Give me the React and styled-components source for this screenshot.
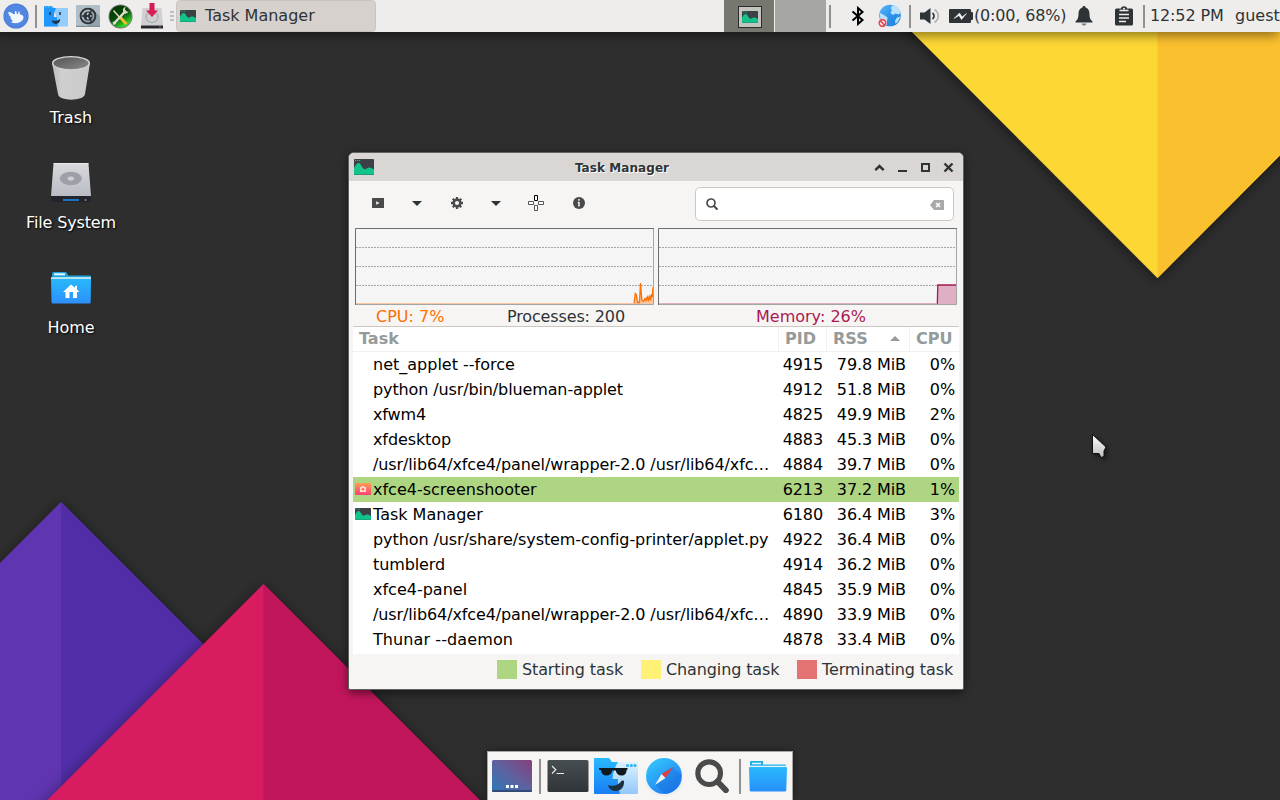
import React from "react";
import styled, { createGlobalStyle } from "styled-components";

const Global = createGlobalStyle`
  * { box-sizing: border-box; }
  html, body { margin: 0; padding: 0; }
  body { font-family: "DejaVu Sans", sans-serif; font-size: 16px; color: #2e3436; overflow: hidden; }
  svg { display: block; flex: none; }
`;

/* ---------- desktop ---------- */

const Desktop = styled.div`
  position: relative;
  width: 1280px;
  height: 800px;
  overflow: hidden;
  background: #2e2e2e;
`;

const WallpaperSvg = styled.svg`
  position: absolute;
  inset: 0;
`;

const Shortcuts = styled.nav`
  position: absolute;
  left: 0;
  top: 52px;
  width: 142px;
  display: flex;
  flex-direction: column;
`;

const Shortcut = styled.div`
  height: 105px;
  display: flex;
  flex-direction: column;
  align-items: center;
`;

const ShortcutLabel = styled.span`
  margin-top: 4px;
  line-height: 19px;
  letter-spacing: ${(p) => p.$track || 0}px;
  color: #fff;
  text-shadow: 1px 1px 2px #000;
`;

const Cursor = styled.svg`
  position: absolute;
  left: 1088px;
  top: 430px;
  filter: drop-shadow(2px 2px 2px rgba(0, 0, 0, 0.5));
`;

/* ---------- top panel ---------- */

const Panel = styled.header`
  position: absolute;
  left: 0;
  top: 0;
  width: 1280px;
  height: 32px;
  display: flex;
  background: #eeedec;
  box-shadow: -4px 2px 10px 2px rgba(0, 0, 0, 0.42);
  white-space: nowrap;
  overflow: visible;
`;

const Slot = styled.div`
  width: ${(p) => p.$w}px;
  height: 32px;
  margin-left: ${(p) => p.$before || 0}px;
  flex: none;
  display: flex;
  align-items: center;
  justify-content: center;
`;

const PanelText = styled.div`
  width: ${(p) => p.$w}px;
  margin-left: ${(p) => p.$before || 0}px;
  letter-spacing: ${(p) => p.$track || 0}px;
  flex: none;
  line-height: 31px;
`;

const Rule = styled.div`
  width: 2px;
  height: ${(p) => p.$h || 23}px;
  background: #8f9190;
`;

const TaskButton = styled.div`
  width: 200px;
  height: 32px;
  flex: none;
  display: flex;
  align-items: center;
  gap: 9px;
  padding-left: 3px;
  line-height: 29px;
  background: #d6d1cd;
  border: 1px solid #c9c4bf;
  border-radius: 4px;
`;

const TaskButtonText = styled.span`
  height: 30px;
`;

const PanelSpace = styled.div`
  flex: 1;
`;

const Workspace = styled.div`
  width: 51px;
  height: 32px;
  flex: none;
  display: flex;
  align-items: center;
  justify-content: center;
  background: ${(p) => (p.$active ? "#767870" : "#a6a6a5")};
  border-right: ${(p) => (p.$active ? "1px solid #eeedec" : "none")};
`;

const MiniWindow = styled.div`
  width: 24px;
  height: 22px;
  margin: 1px 0 0 2px;
  display: flex;
  align-items: center;
  justify-content: center;
  background: #c4c5be;
  border: 1px solid #2b2e2c;
`;

/* ---------- window ---------- */

const Window = styled.main`
  position: absolute;
  left: 348px;
  top: 152px;
  width: 616px;
  height: 538px;
  display: flex;
  flex-direction: column;
  background: #f6f5f4;
  border: 1px solid #61615f;
  border-radius: 6px 6px 2px 2px;
  overflow: hidden;
`;

const WindowShadow = styled.div`
  position: absolute;
  left: 348px;
  top: 152px;
  width: 616px;
  height: 538px;
  border-radius: 6px;
  box-shadow: 0 3px 9px 1px rgba(0, 0, 0, 0.45);
`;

const TitleBar = styled.div`
  height: 28px;
  flex: none;
  display: flex;
  align-items: center;
  padding: 0 8px 0 5px;
  background: #dad6d3;
`;

const Title = styled.h1`
  margin: 0;
  flex: 1;
  padding: 1px 2px 0 0;
  text-align: center;
  font-size: 12px;
  letter-spacing: 0.07px;
  line-height: 28px;
  font-weight: bold;
  text-shadow: 1px 1px 0 #fff;
`;

const TitleButtons = styled.div`
  display: flex;
  gap: 9px;
`;

const Toolbar = styled.div`
  height: 47px;
  flex: none;
  display: flex;
  align-items: center;
  padding: 0 9px;
`;

const ToolButton = styled.div`
  width: ${(p) => p.$w}px;
  height: 34px;
  margin-bottom: 3px;
  display: flex;
  align-items: center;
  justify-content: center;
`;

const Search = styled.div`
  width: 259px;
  height: 34px;
  margin: 0 0 1px auto;
  display: flex;
  align-items: center;
  justify-content: space-between;
  padding: 0 9px 0 10px;
  background: #fff;
  border: 1px solid #cdc7c2;
  border-radius: 5px;
`;

const ClearButton = styled.span`
  padding-top: 2px;
`;

const Graphs = styled.div`
  flex: none;
  display: flex;
  gap: 4px;
  padding: 0 6px;
`;

const Stats = styled.div`
  height: 21px;
  flex: none;
  display: grid;
  grid-template-columns: 27px 131px 249px 1fr;
  line-height: 24px;
`;

const Stat = styled.span`
  color: ${(p) => p.$color || "#2e3436"};
  letter-spacing: ${(p) => p.$track || 0}px;
`;

const Table = styled.div`
  height: 328px;
  flex: none;
  margin: 0 4px;
  background: #fff;
  border-top: 1px solid #cdc7c2;
`;

const Row = styled.div`
  display: grid;
  grid-template-columns: 20px 405px 48px 83px 50px;
  height: 25px;
  align-items: center;
  color: #000;
  background: ${(p) => (p.$starting ? "#aed581" : "transparent")};
`;

const HeadRow = styled.div`
  display: grid;
  grid-template-columns: 425px 48px 83px 50px;
  height: 25px;
  border-bottom: 1px solid #f2f1f0;
  color: #959a9a;
  font-weight: bold;
  line-height: 24px;
`;

const Head = styled.div`
  display: flex;
  align-items: flex-start;
  justify-content: space-between;
  padding-left: 6px;
  padding-right: 9px;
  border-left: ${(p) => (p.$first ? "none" : "1px solid #f2f1f0")};
  white-space: nowrap;
`;

const SortArrow = styled.span`
  padding-top: 9px;
`;

const IconCell = styled.div`
  padding: 0 0 1px 2px;
`;

const Cell = styled.div`
  white-space: nowrap;
  line-height: 25px;
  height: 25px;
  letter-spacing: ${(p) => p.$track || 0}px;
  text-align: ${(p) => (p.$num ? "right" : "left")};
  padding-right: ${(p) => (p.$num ? p.$num : 0)}px;
`;

const Legend = styled.div`
  flex: 1;
  display: grid;
  grid-template-columns: 144px 156px 166px;
  justify-content: end;
  align-items: start;
  padding-top: 6px;
`;

const LegendItem = styled.div`
  display: flex;
  align-items: flex-start;
  gap: 5px;
  height: 20px;
  line-height: 20px;
  letter-spacing: -0.12px;
  white-space: nowrap;
`;

const Swatch = styled.i`
  width: 20px;
  height: 19px;
  background: ${(p) => p.$color};
`;

/* ---------- dock ---------- */

const Dock = styled.footer`
  position: absolute;
  left: 487px;
  top: 751px;
  width: 306px;
  height: 49px;
  display: flex;
  background: #f6f5f4;
  border: 1px solid #aaa5a0;
  border-bottom: none;
  box-shadow: 0 0 8px rgba(0, 0, 0, 0.4);
`;

const DockItem = styled.div`
  width: ${(p) => p.$w}px;
  height: 48px;
  flex: none;
  display: flex;
  align-items: center;
  justify-content: center;
`;

/* ---------- drawings ---------- */

const Wallpaper = () => (
  <WallpaperSvg width="1280" height="800" viewBox="0 0 1280 800">
    <defs>
      <filter id="soft" x="-20%" y="-20%" width="140%" height="140%">
        <feDropShadow dx="0" dy="2" stdDeviation="7" floodColor="#000" floodOpacity="0.5" />
      </filter>
    </defs>
    <g filter="url(#soft)">
      <path d="M880 0H1435L1157.500 278z" fill="#fdd835" />
      <path d="M1157.500 0H1435L1157.500 278z" fill="#fbc02d" />
    </g>
    <g filter="url(#soft)">
      <path d="M61 502L-300 863H422z" fill="#5e35b1" />
      <path d="M61 502V863H422z" fill="#512da8" />
    </g>
    <g filter="url(#soft)">
      <path d="M263.500 584L-20 867.500H547z" fill="#d81b60" />
      <path d="M263.500 584V867.500H547z" fill="#c2185b" />
    </g>
  </WallpaperSvg>
);

const MonitorIcon = ({ w, h }) => (
  <svg width={w} height={h} viewBox="0 0 20 16" preserveAspectRatio="none">
    <rect width="20" height="16" rx="0.8" fill="#3c4145" />
    <path d="M0 9C1.500 6 2.800 4 4.800 4s3.200 5 5.200 6 3.500-1.600 5.500-1.500S18 9.500 20 10.500v4.700a.8.8 0 0 1-.8.8H.8a.8.8 0 0 1-.8-.8z" fill="#12c48b" />
    <path d="M0 15h20v.5a.6.600 0 0 1-.6.5H.6a.6.600 0 0 1-.6-.5z" fill="#1d9e78" />
    <path d="M1 1.500h1.200M3 1.500h1.200M5 1.500h1.200" stroke="#12c48b" />
  </svg>
);

const TrashIcon = () => (
  <svg width="48" height="52" viewBox="0 0 48 52">
    <defs>
      <linearGradient id="bin" x1="0" x2="1"><stop stopColor="#b9b9b9" /><stop offset=".25" stopColor="#cfcfcf" /><stop offset="1" stopColor="#cacaca" /></linearGradient>
      <linearGradient id="hole" x1="0" x2="1" y2="1"><stop stopColor="#555" /><stop offset="1" stopColor="#888" /></linearGradient>
    </defs>
    <path d="M5 11l6 31c.5 7.500 26 7.500 27 0l5-31z" fill="url(#bin)" />
    <ellipse cx="24" cy="11" rx="19" ry="7" fill="#d8d8d8" />
    <ellipse cx="24" cy="11.200" rx="17.500" ry="6" fill="url(#hole)" />
  </svg>
);

const DriveIcon = () => (
  <svg width="48" height="52" viewBox="0 0 48 52">
    <defs><linearGradient id="drive" y2="1" x2="0"><stop stopColor="#d8d9dc" /><stop offset="1" stopColor="#b9bcc5" /></linearGradient></defs>
    <path d="M4 38h40v5a2 2 0 0 1-2 2H6a2 2 0 0 1-2-2z" fill="#22252b" />
    <path d="M6.500 6.500h35L44 39H4z" fill="url(#drive)" />
    <path d="M6.500 6.500h35" stroke="#ececee" />
    <ellipse cx="23.800" cy="21.500" rx="11" ry="6.700" fill="#9da0a6" />
    <ellipse cx="23.800" cy="21.500" rx="3.200" ry="2" fill="#ced0d4" />
    <path d="M16 43h16" stroke="#1f73c4" strokeWidth="2" />
    <circle cx="38.500" cy="43" r="1" fill="#888" />
  </svg>
);

const HomeIcon = () => (
  <svg width="48" height="52" viewBox="0 0 48 52">
    <defs><linearGradient id="fold" y2="1" x2="0"><stop stopColor="#28b8fb" /><stop offset="1" stopColor="#2d90fc" /></linearGradient></defs>
    <path d="M5 12V11.500a1.500 1.500 0 0 1 1.500-1.500h12c1.500 0 2 3 3 3.500h21.500a1 1 0 0 1 1 1V22H5z" fill="#1aa5dc" />
    <path d="M7 12.300h11" stroke="#e8f5fa" strokeWidth="2" />
    <path d="M4 15.300h40v1.700H4z" fill="#edf3ef" />
    <path d="M4 16.700h40v1.800l-.3 21.500a1.500 1.500 0 0 1-1.500 1.500H6A1.500 1.500 0 0 1 4.500 40z" fill="url(#fold)" />
    <path d="M24 22.500l-8 7.500h2.500v6h4v-6h3.500v6h4v-6h2.500l-2.500-2.400v-3.800h-2v2z" fill="#fff" />
  </svg>
);

const MouseIcon = () => (
  <svg width="26" height="26" viewBox="0 0 26 26">
    <circle cx="13" cy="13" r="12.600" fill="#4a7ad0" />
    <circle cx="13" cy="13" r="11.500" fill="#5187e3" />
    <g fill="#fff" opacity=".93">
      <path d="M5.300 9c2.200-.5 3.800.8 5.500 2.300 3.500-.8 7.500-.3 9 1.200 1.500 2 .4 5-2.600 6.500-3 1.500-6.500 1.500-9 .3.300-.8 1-1.300 2-1.500-2.200-1-3-2.500-2.500-4.300C6.500 13 5.300 11.500 5.300 9z" />
      <path d="M11.800 8.700c.6-.9 1.500-.7 1.700.2l.5 3-2 .6zM15.200 9c.6-.8 1.300-.5 1.500.3l.1 2.700-1.600.3z" />
    </g>
  </svg>
);

const FinderIcon = () => (
  <svg width="24" height="22" viewBox="0 0 24 22">
    <path d="M0 1h8l2 2.500V21H0z" fill="#2b9cfa" />
    <path d="M10 3h14v18.500H0V19h14z" fill="#92cdfc" />
    <path d="M0 3h12c-1.400 3-2 6-2 9h3c0 3.500.3 6.500 1.200 9.500H0z" fill="#1f96f9" />
    <path d="M1 1.500h1M4 1.500h1M7 1.500h1" stroke="#62d1ff" strokeWidth="1.500" />
    <path d="M6 7v3M16 7v3" stroke="#1d3553" strokeWidth="1.500" />
    <path d="M7.500 15c3 1.500 6 1 8.500-1.200.5 2.700-1.200 5.200-4 5.200-2 0-3.800-1.400-4.500-4z" fill="#1d3553" />
  </svg>
);

const SettingsIcon = () => (
  <svg width="24" height="22" viewBox="0 0 24 22">
    <rect width="24" height="22" rx="1" fill="#b0bec5" />
    <path d="M17.500 5l6.500 6.500V21H13l-6.500-5z" fill="#93a3ab" />
    <rect y="20.800" width="24" height="1.200" fill="#7f8c92" />
    <circle cx="12" cy="11" r="7.400" fill="none" stroke="#2c3439" strokeWidth="1.900" />
    <circle cx="12" cy="11" r="4.600" fill="#2c3439" />
    <path d="M6 11h3M13 12.500l2.300 4M13 9.500l2.300-4" stroke="#2c3439" strokeWidth="1.600" />
    <path d="M11 9.800L12.500 7.800M11 12.200l1.500 2M14 11h1.600" stroke="#c3cdd2" strokeWidth="1.500" />
  </svg>
);

const ToolsIcon = () => (
  <svg width="25" height="25" viewBox="0 0 25 25">
    <defs><linearGradient id="ball" x2=".6" y2="1"><stop stopColor="#023202" /><stop offset=".55" stopColor="#044b04" /><stop offset="1" stopColor="#38e22c" /></linearGradient></defs>
    <circle cx="12.500" cy="12.500" r="12" fill="#777" />
    <circle cx="12.500" cy="12.500" r="11" fill="url(#ball)" />
    <path d="M5.500 6.500L17.500 20" stroke="#ded9cb" strokeWidth="1.500" />
    <path d="M12 13l6.500 7" stroke="#f5bd25" strokeWidth="2.600" />
    <path d="M18 6.500L6.500 19" stroke="#e0ddd0" strokeWidth="2.500" />
    <path d="M17.500 3c-2.500.5-3 3-2 5.300s4 1.500 5-.8l-2.500.5-1.300-1.500zM4.500 18c2-.5 3.500.5 3.500 2l-2.500 1z" fill="#e0ddd0" />
  </svg>
);

const InstallIcon = () => (
  <svg width="24" height="26" viewBox="0 0 24 26">
    <path d="M2.500 5h19L23 22.500H1z" fill="#d0d0d3" />
    <path d="M1 22.500h22v3H1z" fill="#25272c" />
    <ellipse cx="12" cy="14" rx="6" ry="5.500" fill="none" stroke="#b3b4b8" strokeWidth="1.500" />
    <circle cx="20" cy="24" r=".7" fill="#999" />
    <path d="M9.500 0h5v7.500H18l-6 6.500L6 7.500h3.500z" fill="#d81b52" />
  </svg>
);

const BluetoothIcon = () => (
  <svg width="14" height="20" viewBox="0 0 14 20">
    <path d="M1.500 5.500l10 8.500L7 18V2l4.500 4L1.500 14.500" fill="none" stroke="#000" strokeWidth="2" />
  </svg>
);

const GlobeIcon = () => (
  <svg width="24" height="24" viewBox="0 0 24 24">
    <defs><linearGradient id="sea" x2="1" y2="1"><stop stopColor="#5db8f7" /><stop offset=".5" stopColor="#2f93ea" /><stop offset="1" stopColor="#1f7fdc" /></linearGradient></defs>
    <circle cx="12" cy="11.500" r="10.800" fill="url(#sea)" />
    <path d="M15 1c4 .8 6.500 4 7.500 8l-2 1.500-3-1L15 11l-2.500-2 1.500-3-1.500-2zM2 9l4 2 3.500 2.500L9 17l-1 3.500C4 18.500 1.300 14.500 2 9zM19 13.500l3-1c-.5 3-2 5.500-4.500 7.200l-.5-3z" fill="#b9e1fb" />
    <circle cx="4.500" cy="19" r="4.500" fill="#fff" />
    <circle cx="4.500" cy="19" r="3.300" fill="none" stroke="#e14a52" strokeWidth="1.700" />
    <path d="M2.200 16.700l4.600 4.600" stroke="#e14a52" strokeWidth="1.700" />
  </svg>
);

const SpeakerIcon = () => (
  <svg width="21" height="18" viewBox="0 0 21 18">
    <path d="M0 5.500h4.500L10.500 1v16L4.500 12.500H0z" fill="#2e3436" />
    <path d="M12.500 6c2 1.700 2 4.300 0 6" fill="none" stroke="#2e3436" strokeWidth="1.700" />
    <path d="M14.500 2.500c5 3.500 5 9.500 0 13" fill="none" stroke="#b4b6b5" strokeWidth="1.800" />
  </svg>
);

const BatteryIcon = () => (
  <svg width="24" height="14" viewBox="0 0 24 14">
    <path d="M1 0h20a1 1 0 0 1 1 1v2h1a1 1 0 0 1 1 1v6a1 1 0 0 1-1 1h-1v2a1 1 0 0 1-1 1H1a1 1 0 0 1-1-1V1a1 1 0 0 1 1-1z" fill="#2e3436" />
    <path d="M5 9.500L10.500 4l2.500 4 4.500-3.500-5 6-2.500-4z" fill="#fff" stroke="#fff" strokeWidth=".5" />
  </svg>
);

const BellIcon = () => (
  <svg width="18" height="20" viewBox="0 0 18 20">
    <path d="M9 0c1 0 1.600.7 1.600 1.500C13.500 2.500 14.500 5 14.500 8c0 4 .8 5.500 3 7.500v1H.5v-1c2.200-2 3-3.500 3-7.500 0-3 1-5.500 3.900-6.500C7.400.7 8 0 9 0z" fill="#2e3436" />
    <path d="M6.500 17.500h5c-.5 2.700-4.500 2.700-5 0z" fill="#7d8080" />
  </svg>
);

const ClipboardIcon = () => (
  <svg width="18" height="20" viewBox="0 0 18 20">
    <path d="M1.500 2.500H6C6-.5 12-.5 12 2.500h4.500A1.500 1.500 0 0 1 18 4v14a1.500 1.500 0 0 1-1.500 1.500h-15A1.500 1.500 0 0 1 0 18V4a1.500 1.500 0 0 1 1.500-1.500z" fill="#2e3436" />
    <path d="M4.500 4.500h9M4 8.500h10M4 12h10M4 15.500h7" stroke="#eeedec" strokeWidth="1.600" />
    <circle cx="9" cy="2.700" r="1" fill="#eeedec" />
  </svg>
);

const GripIcon = () => (
  <svg width="4" height="11" viewBox="0 0 4 11"><path d="M0 1h4M0 5h4M0 9h4" stroke="#8f9190" /></svg>
);

const RunIcon = () => (
  <svg width="12" height="10" viewBox="0 0 12 10"><path fill="#4a4a4a" fillRule="evenodd" d="M0 0h12v10H0zM4.200 3.200v3.600L7.500 5z" /></svg>
);
const Caret = () => (
  <svg width="10" height="5" viewBox="0 0 10 5"><path d="M0 0h10L5 5z" fill="#2e3436" /></svg>
);
const Gear = () => (
  <svg width="12" height="12" viewBox="-6 -6 12 12">
    <circle r="3.300" fill="none" stroke="#4a4a4a" strokeWidth="2.500" />
    {[0, 45, 90, 135].map((a) => (
      <path key={a} d="M0-6v2.500M0 6V3.500" stroke="#4a4a4a" strokeWidth="2.300" transform={`rotate(${a})`} />
    ))}
  </svg>
);
const Crosshair = () => (
  <svg width="16" height="16" viewBox="0 0 16 16" fill="#fff">
    <path d="M6.500.5h3v5h-3z" stroke="#000" />
    <path d="M.5 6.500h5v3h-5zM10.500 6.500h5v3h-5zM6.500 10.500h3v5h-3z" stroke="#555" />
  </svg>
);
const Info = () => (
  <svg width="12" height="12" viewBox="0 0 12 12">
    <circle cx="6" cy="6" r="6" fill="#4a4a4a" />
    <path d="M6 2v1.800M6 5v4.500M4.800 5.500h1.200" stroke="#f6f5f4" strokeWidth="1.500" />
  </svg>
);
const Magnifier = ({ size, stroke }) => (
  <svg width={size} height={size} viewBox="0 0 12 12">
    <circle cx="5" cy="5" r="4" fill="none" stroke="#4a4a4a" strokeWidth={stroke} />
    <path d="M8 8l2.900 3" stroke="#4a4a4a" strokeWidth={stroke * 1.150} strokeLinecap="round" />
  </svg>
);
const ClearIcon = () => (
  <svg width="14" height="10" viewBox="0 0 14 10">
    <path d="M4 0h9.500a.5.500 0 0 1 .5.500v9a.5.500 0 0 1-.5.500H4L0 5z" fill="#a9a9a9" />
    <path d="M6 3l4 4M10 3L6 7" stroke="#fff" strokeWidth="1.500" />
  </svg>
);

const ShadeIcon = () => (
  <svg width="14" height="14" viewBox="0 0 14 14"><path d="M3.300 10.200L7.500 6l4.200 4.200" fill="none" stroke="#2e3436" strokeWidth="2.500" /></svg>
);
const MinimizeIcon = () => (
  <svg width="14" height="14" viewBox="0 0 14 14"><path d="M3 11h9" stroke="#2e3436" strokeWidth="2" /></svg>
);
const MaximizeIcon = () => (
  <svg width="14" height="14" viewBox="0 0 14 14"><path d="M4 4h7v7H4z" fill="none" stroke="#2e3436" strokeWidth="2" /></svg>
);
const CloseIcon = () => (
  <svg width="14" height="14" viewBox="0 0 14 14"><path d="M3.500 3.500l8 8M11.500 3.500l-8 8" stroke="#2e3436" strokeWidth="2.400" /></svg>
);

const Graph = ({ line, color, fill, idleTo }) => (
  <svg width="299" height="77" viewBox="0 0 299 77">
    <rect width="299" height="77" fill="#f5f5f5" />
    <path d={`${line}V76H${idleTo}z`} fill={fill} />
    <path d="M1 19.500H298M1 38.500H298M1 57.500H298" stroke="#a6a6a6" strokeDasharray="2 1" />
    <path d={line} fill="none" stroke={color} strokeWidth="1.300" />
    <path d={`M1 75.500H${idleTo}`} stroke={fill} />
    <path d="M.5 77V.5H299" fill="none" stroke="#6c6d6e" />
    <path d="M298.500 1V76.500H1" fill="none" stroke="#a3a4a4" />
  </svg>
);

const CameraIcon = () => (
  <svg width="16" height="12" viewBox="0 0 16 12">
    <defs><linearGradient id="cam" x2="0" y2="1"><stop stopColor="#ff9e4f" /><stop offset="1" stopColor="#fd3f77" /></linearGradient></defs>
    <rect width="16" height="12" rx="1" fill="url(#cam)" />
    <path d="M5 4h1.500L7 3h2l.5 1H11v5H5z" fill="#ffd9d2" />
    <circle cx="8" cy="6.300" r="1.300" fill="#ff6a63" />
  </svg>
);

const ShowDesktopIcon = () => (
  <svg width="42" height="34" viewBox="0 0 42 34">
    <defs><linearGradient id="desk" x1="0" y1="1" x2="1" y2="0"><stop stopColor="#2d79b8" /><stop offset=".5" stopColor="#5e62a0" /><stop offset="1" stopColor="#863f78" /></linearGradient></defs>
    <rect x="1" y="1" width="40" height="32" rx="1.500" fill="url(#desk)" />
    <path d="M1 31h40v.5a1.500 1.500 0 0 1-1.500 1.500h-37A1.500 1.500 0 0 1 1 31.500z" fill="#344a76" />
    <path d="M15 27.500h3M19.500 27.500h3M24 27.500h3" stroke="#fff" strokeWidth="3" />
  </svg>
);
const TerminalIcon = () => (
  <svg width="42" height="34" viewBox="0 0 42 34">
    <defs><linearGradient id="term" x2="0" y2="1"><stop stopColor="#474e52" /><stop offset="1" stopColor="#2f3438" /></linearGradient></defs>
    <rect x="0.500" y="1" width="41" height="32" rx="1.500" fill="url(#term)" />
    <path d="M5 7l3.800 3.700L5 14.500M9.500 14.500h7.500" fill="none" stroke="#e9e9e9" strokeWidth="1.200" />
  </svg>
);
const CoolFinderIcon = () => (
  <svg width="44" height="38" viewBox="0 0 44 38">
    <defs>
      <linearGradient id="ca" x2="0" y2="1"><stop stopColor="#29b9fd" /><stop offset="1" stopColor="#1a7df5" /></linearGradient>
      <linearGradient id="cb" x2="0" y2="1"><stop stopColor="#dcf2fe" /><stop offset="1" stopColor="#92c8fb" /></linearGradient>
    </defs>
    <path d="M18 5h25a1 1 0 0 1 1 1v30a1 1 0 0 1-1 1H18z" fill="url(#cb)" />
    <path d="M0 2a1 1 0 0 1 1-1h14l3 4h6c-3 5-5 10-5.500 17H24c-.5 6 .5 10 2 15H1a1 1 0 0 1-1-1z" fill="url(#ca)" />
    <g fill="#27b0f8">
      <circle cx="33.500" cy="8.500" r="1.500" /><circle cx="37.300" cy="8.500" r="1.500" /><circle cx="41" cy="8.500" r="1.500" />
    </g>
    <path d="M5 11h28.500v1.500l-1 .7c0 3.300-2 5.300-5 5.300s-5.300-2-5.700-5h-3.600c-.4 3-2.500 5-5.700 5s-5.200-2-5.500-5.300L5 12.500z" fill="#101820" />
    <path d="M14 28c5 2 10.500.5 14-4.500 1.200-.2 2 .2 2 1C30.500 29.500 27 34 22 34c-4 0-7-2-8-6z" fill="#1b3140" />
  </svg>
);
const CompassIcon = () => (
  <svg width="40" height="40" viewBox="0 0 40 40">
    <defs><linearGradient id="cp" x1=".1" x2=".8" y2="1"><stop stopColor="#35c9fc" /><stop offset="1" stopColor="#1e76f3" /></linearGradient></defs>
    <circle cx="20" cy="20.500" r="19.300" fill="#dfe1e3" />
    <circle cx="20" cy="20" r="19" fill="#f8fafb" />
    <circle cx="20" cy="20" r="18" fill="url(#cp)" />
    <path d="M29 11l8 8c-.5 9-7 17-15 19L11 29z" fill="#1766d0" opacity=".35" />
    <path d="M29 11L17.500 18l4 4z" fill="#e53c40" />
    <path d="M11 29l6.500-11 4 4z" fill="#eef2f5" />
  </svg>
);
const FolderIcon = () => (
  <svg width="40" height="34" viewBox="0 0 40 34">
    <defs><linearGradient id="fl" x2="0" y2="1"><stop stopColor="#29b8fb" /><stop offset="1" stopColor="#2790fc" /></linearGradient></defs>
    <path d="M2 7V3a1 1 0 0 1 1-1h12v3.500h22a1 1 0 0 1 1 1V10H2z" fill="#1fb0ea" />
    <path d="M4 4.500h9M2 7.500h36" stroke="#e4f4fb" strokeWidth="1.400" />
    <path d="M1 8.300h38L38.300 31a1.500 1.500 0 0 1-1.500 1.500H3.200A1.500 1.500 0 0 1 1.700 31z" fill="url(#fl)" />
  </svg>
);

/* ---------- data ---------- */

const tasks = [
  { name: "net_applet --force", pid: "4915", rss: "79.8 MiB", cpu: "0%" },
  { name: "python /usr/bin/blueman-applet", pid: "4912", rss: "51.8 MiB", cpu: "0%", track: -0.12 },
  { name: "xfwm4", pid: "4825", rss: "49.9 MiB", cpu: "2%", track: -0.1 },
  { name: "xfdesktop", pid: "4883", rss: "45.3 MiB", cpu: "0%", track: -0.1 },
  { name: "/usr/lib64/xfce4/panel/wrapper-2.0 /usr/lib64/xfc…", pid: "4884", rss: "39.7 MiB", cpu: "0%", track: -0.11 },
  { name: "xfce4-screenshooter", pid: "6213", rss: "37.2 MiB", cpu: "1%", starting: true, icon: <CameraIcon /> },
  { name: "Task Manager", pid: "6180", rss: "36.4 MiB", cpu: "3%", icon: <MonitorIcon w={16} h={12} /> },
  { name: "python /usr/share/system-config-printer/applet.py", pid: "4922", rss: "36.4 MiB", cpu: "0%", track: -0.09 },
  { name: "tumblerd", pid: "4914", rss: "36.2 MiB", cpu: "0%", track: -0.1 },
  { name: "xfce4-panel", pid: "4845", rss: "35.9 MiB", cpu: "0%" },
  { name: "/usr/lib64/xfce4/panel/wrapper-2.0 /usr/lib64/xfc…", pid: "4890", rss: "33.9 MiB", cpu: "0%", track: -0.11 },
  { name: "Thunar --daemon", pid: "4878", rss: "33.4 MiB", cpu: "0%", track: 0.1 },
];

const legend = [
  ["Starting task", "#aed581"],
  ["Changing task", "#fff176"],
  ["Terminating task", "#e57373"],
];

const cpuLine =
  "M279 75.500L280.300 65.500 281.500 67 282.500 74.500H284.500L285.500 55 286.800 72 288.500 73.500 290 70.500 291 72.500 292.300 69 293.300 72 294.500 67.500 295.500 72.500 296.500 66 297.300 69 298 59";
const memLine = "M279.300 76L279.800 57H298";

export default function App() {
  return (
    <Desktop>
      <Global />
      <Wallpaper />
      <Shortcuts>
        <Shortcut><TrashIcon /><ShortcutLabel>Trash</ShortcutLabel></Shortcut>
        <Shortcut><DriveIcon /><ShortcutLabel $track={-0.15}>File System</ShortcutLabel></Shortcut>
        <Shortcut><HomeIcon /><ShortcutLabel>Home</ShortcutLabel></Shortcut>
      </Shortcuts>

      <Panel>
        <Slot $w={32}><MouseIcon /></Slot>
        <Slot $w={8}><Rule /></Slot>
        <Slot $w={32}><FinderIcon /></Slot>
        <Slot $w={32}><SettingsIcon /></Slot>
        <Slot $w={32}><ToolsIcon /></Slot>
        <Slot $w={32}><InstallIcon /></Slot>
        <Slot $w={8}><GripIcon /></Slot>
        <TaskButton><MonitorIcon w={16} h={12} /><TaskButtonText>Task Manager</TaskButtonText></TaskButton>
        <PanelSpace />
        <Workspace $active><MiniWindow><MonitorIcon w={16} h={12} /></MiniWindow></Workspace>
        <Workspace />
        <Slot $w={8}><Rule /></Slot>
        <Slot $w={47}><BluetoothIcon /></Slot>
        <Slot $w={17}><GlobeIcon /></Slot>
        <Slot $w={24}><Rule /></Slot>
        <Slot $w={16}><SpeakerIcon /></Slot>
        <Slot $w={26} $before={10}><BatteryIcon /></Slot>
        <PanelText $w={91} $track={-0.16}>(0:00, 68%)</PanelText>
        <Slot $w={38}><BellIcon /></Slot>
        <Slot $w={36} $before={3}><ClipboardIcon /></Slot>
        <Slot $w={4}><Rule /></Slot>
        <PanelText $w={85} $before={4} $track={-0.13}>12:52 PM</PanelText>
        <PanelText $w={45}>guest</PanelText>
      </Panel>

      <WindowShadow />
      <Window>
        <TitleBar>
          <MonitorIcon w={20} h={16} />
          <Title>Task Manager</Title>
          <TitleButtons><ShadeIcon /><MinimizeIcon /><MaximizeIcon /><CloseIcon /></TitleButtons>
        </TitleBar>
        <Toolbar>
          <ToolButton $w={40}><RunIcon /></ToolButton>
          <ToolButton $w={38}><Caret /></ToolButton>
          <ToolButton $w={42}><Gear /></ToolButton>
          <ToolButton $w={36}><Caret /></ToolButton>
          <ToolButton $w={44}><Crosshair /></ToolButton>
          <ToolButton $w={42}><Info /></ToolButton>
          <Search>
            <Magnifier size={12} stroke={1.700} />
            <ClearButton><ClearIcon /></ClearButton>
          </Search>
        </Toolbar>
        <Graphs>
          <Graph line={cpuLine} color="#ff6e00" fill="#f9c6a0" idleTo={279} />
          <Graph line={memLine} color="#ab1852" fill="#dfb0c3" idleTo={279} />
        </Graphs>
        <Stats>
          <span />
          <Stat $color="#ff6e00">CPU: 7%</Stat>
          <Stat $track={-0.14}>Processes: 200</Stat>
          <Stat $color="#ab1852">Memory: 26%</Stat>
        </Stats>
        <Table>
          <HeadRow>
            <Head $first>Task</Head>
            <Head>PID</Head>
            <Head>
              RSS
              <SortArrow>
                <svg width="10" height="5" viewBox="0 0 10 5"><path d="M0 5h10L5 0z" fill="#959a9a" /></svg>
              </SortArrow>
            </Head>
            <Head>CPU</Head>
          </HeadRow>
          {tasks.map((t) => (
            <Row key={t.pid} $starting={t.starting}>
              <IconCell>{t.icon}</IconCell>
              <Cell $track={t.track}>{t.name}</Cell>
              <Cell $num={3} $track={-0.12}>{t.pid}</Cell>
              <Cell $num={3} $track={-0.1}>{t.rss}</Cell>
              <Cell $num={4} $track={-0.12}>{t.cpu}</Cell>
            </Row>
          ))}
        </Table>
        <Legend>
          {legend.map(([label, color]) => (
            <LegendItem key={label}><Swatch $color={color} />{label}</LegendItem>
          ))}
        </Legend>
      </Window>

      <Dock>
        <DockItem $w={48}><ShowDesktopIcon /></DockItem>
        <DockItem $w={8}><Rule $h={35} /></DockItem>
        <DockItem $w={48}><TerminalIcon /></DockItem>
        <DockItem $w={48}><CoolFinderIcon /></DockItem>
        <DockItem $w={48}><CompassIcon /></DockItem>
        <DockItem $w={48}><Magnifier size={34} stroke={1.800} /></DockItem>
        <DockItem $w={8}><Rule $h={35} /></DockItem>
        <DockItem $w={48}><FolderIcon /></DockItem>
      </Dock>

      <Cursor width="24" height="32" viewBox="0 0 24 32">
        <defs><linearGradient id="cur" x2="0" y2="1"><stop stopColor="#fff" /><stop offset="1" stopColor="#bdbdbd" /></linearGradient></defs>
        <path d="M4.500 4.500V23.500H11L13 27.500 16 26.500V21L18 17z" fill="url(#cur)" stroke="#111" />
      </Cursor>
    </Desktop>
  );
}
